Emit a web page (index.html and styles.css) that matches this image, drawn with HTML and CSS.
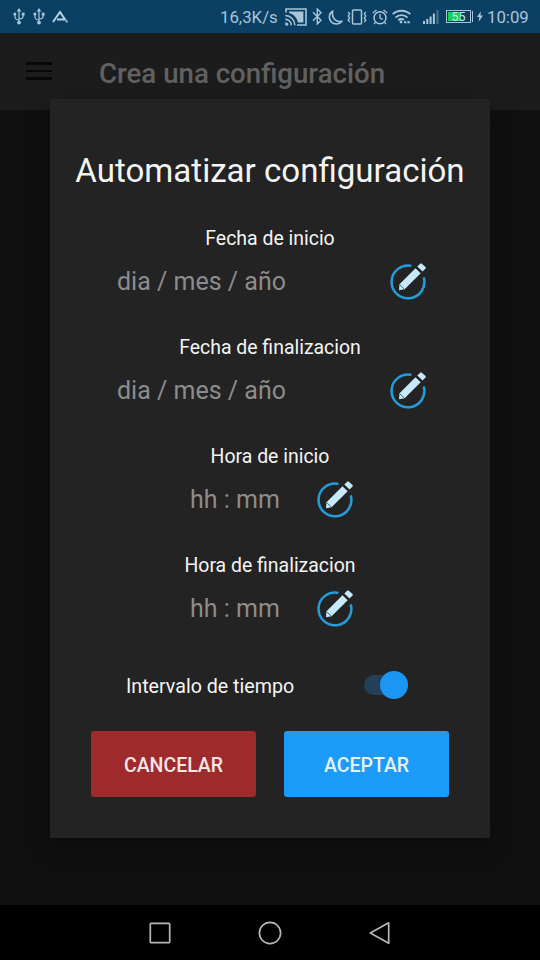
FILE: index.html
```html
<!DOCTYPE html>
<html lang="es">
<head>
<meta charset="utf-8">
<title>Automatizar configuración</title>
<link rel="stylesheet" href="styles.css">
</head>
<body>
<svg class="defs" width="0" height="0">
  <defs>
    <symbol id="edit" viewBox="0 0 38 38">
      <path d="M22.500 3.900A16.400 16.400 0 1 0 34.700 15.300" fill="none" stroke="#239ddb" stroke-width="2.500"/>
      <path d="M10.500 22.200 26.500 6.200 31.700 11.200 15.600 27.200 10 28.200Z" fill="#c6eafb"/>
      <path d="M28.300 4.500 31.200 1.700Q32 1 32.800 1.700L36.500 5.100Q37.200 5.800 36.500 6.600L33.600 9.500Z" fill="#c6eafb"/>
      <path d="M10.700 22.600 15.200 27" stroke="#397083" stroke-width="1"/>
    </symbol>
    <symbol id="usb" viewBox="0 0 12 17">
      <path d="M6 2v12M6 12C2 11.800 1.800 10 1.800 6M6 11c4 0 4.200-1.500 4.200-5" fill="none" stroke="#a5c8df" stroke-width="1.200"/>
      <path d="M6 0 8.300 3.500H3.700Z" fill="#a5c8df"/>
      <circle cx="6" cy="14.600" r="1.900" fill="#a5c8df"/>
      <circle cx="1.900" cy="6" r="1.500" fill="#a5c8df"/>
      <path d="M8.800 4.700h2.800v2.800H8.800z" fill="#a5c8df"/>
    </symbol>
  </defs>
</svg>
<div class="screen">
  <header class="status">
    <svg class="usb" width="12" height="17"><use href="#usb"/></svg>
    <svg class="usb-second" width="12" height="17"><use href="#usb"/></svg>
    <svg class="logo" width="16" height="13" viewBox="0 0 16 13"><path d="M1 12 8 2l5 7.500H5" fill="none" stroke="#b3d2e6" stroke-width="2"/><circle cx="14.700" cy="11.500" r="1.100" fill="#b3d2e6"/></svg>
    <span class="speed">16,3K/s</span>
    <svg class="cast" width="22" height="18" viewBox="0 0 22 18"><path d="M1 4.500V1h20v16h-9" fill="none" stroke="#a9c5d7" stroke-width="1.600"/><path d="M4 3.600h14.400v10.800h-5.400A12.500 12.500 0 0 0 4 5Z" fill="#a9c5d7"/><path d="M.3 7.600A9.600 9.600 0 0 1 9.900 17.200M.3 11.200A6 6 0 0 1 6.300 17.200" fill="none" stroke="#a9c5d7" stroke-width="1.500"/><path d="M.3 14.300A3 3 0 0 1 3.300 17.400H.3Z" fill="#a9c5d7"/></svg>
    <svg class="bluetooth" width="11" height="17" viewBox="0 0 11 17"><path d="M1 4.200 9 12.300 5.300 16V1L9 4.700 1 12.800" fill="none" stroke="#a9c5d7" stroke-width="1.400"/></svg>
    <svg class="moon" width="15" height="15" viewBox="0 0 15 15"><path d="M4.800 1A7 7 0 1 0 14 11.200Q9.500 12.400 6.500 9.200T4.800 1Z" fill="none" stroke="#a9c5d7" stroke-width="1.600" stroke-linejoin="round"/></svg>
    <svg class="vibrate" width="20" height="16" viewBox="0 0 20 16"><rect x="5.500" y="1" width="9" height="14" rx="1" fill="none" stroke="#a9c5d7" stroke-width="1.500"/><path d="M1.200 3l1.500 2-1.500 2 1.500 2-1.500 2 1.500 2M18.800 3l-1.500 2 1.500 2-1.500 2 1.500 2-1.500 2" fill="none" stroke="#a9c5d7" stroke-width="1.300"/></svg>
    <svg class="alarm" width="16" height="16" viewBox="0 0 16 16"><circle cx="8" cy="8.700" r="6" fill="none" stroke="#a9c5d7" stroke-width="1.500"/><path d="M8 5v4l2.700 1.400M.8 4 4.500 1M15.200 4 11.500 1M3.500 13.200 2 15M12.500 13.200 14 15" fill="none" stroke="#a9c5d7" stroke-width="1.300"/></svg>
    <svg class="wifi" width="19" height="15" viewBox="0 0 19 15"><path d="M.7 5.200A13 13 0 0 1 18.300 5.200M3.500 8.500A9 9 0 0 1 15.500 8.500M6.300 11.200A5 5 0 0 1 12 10.800" fill="none" stroke="#a9c5d7" stroke-width="1.800"/><circle cx="9" cy="13" r="1.400" fill="#a9c5d7"/><path d="M12 13.200h6" stroke="#a9c5d7" stroke-width="2" stroke-dasharray="2.400 1"/></svg>
    <svg class="signal" width="16" height="14" viewBox="0 0 16 14"><path d="M1 14v-3M4.300 14V9M7.600 14V6.500M10.900 14V3.500" stroke="#a9c5d7" stroke-width="2"/><path d="M14.500 14V0" stroke="#4b718c" stroke-width="2"/></svg>
    <div class="battery"><span class="battery-level">55</span></div>
    <svg class="bolt" width="6" height="11" viewBox="0 0 7 12"><path d="M4.500 0 0 6.700h2.700L2 12 7 4.800H4Z" fill="#a9c5d7"/></svg>
    <span class="clock">10:09</span>
  </header>
  <div class="appbar">
    <div class="menu"><i></i><i></i><i></i></div>
    <span class="appbar-title">Crea una configuración</span>
  </div>
  <main class="content">
    <section class="dialog">
      <h1 class="title">Automatizar configuración</h1>
      <div class="group">
        <div class="label">Fecha de inicio</div>
        <div class="field-row"><div class="field">dia / mes / año</div><svg class="edit"><use href="#edit"/></svg></div>
      </div>
      <div class="group">
        <div class="label">Fecha de finalizacion</div>
        <div class="field-row"><div class="field">dia / mes / año</div><svg class="edit"><use href="#edit"/></svg></div>
      </div>
      <div class="group">
        <div class="label">Hora de inicio</div>
        <div class="field-row time"><div class="field">hh : mm</div><svg class="edit"><use href="#edit"/></svg></div>
      </div>
      <div class="group">
        <div class="label">Hora de finalizacion</div>
        <div class="field-row time"><div class="field">hh : mm</div><svg class="edit"><use href="#edit"/></svg></div>
      </div>
      <div class="interval">
        <span class="interval-label">Intervalo de tiempo</span>
        <div class="switch"><div class="thumb"></div></div>
      </div>
      <div class="actions">
        <div class="button cancel">CANCELAR</div>
        <div class="button accept">ACEPTAR</div>
      </div>
    </section>
  </main>
  <nav class="navbar">
    <svg width="24" height="24" viewBox="0 0 24 24"><rect x="2.300" y="2.300" width="19.400" height="19.400" rx="1"/></svg>
    <svg width="24" height="24" viewBox="0 0 24 24"><circle cx="12" cy="12" r="10.600"/></svg>
    <svg width="24" height="24" viewBox="0 0 24 24"><path d="M20.700 1.800v20.400L2.300 12Z"/></svg>
  </nav>
</div>
</body>
</html>
```
FILE: styles.css
```css
* { box-sizing: border-box; }
body { margin: 0; background: #000; font-family: Roboto, "Liberation Sans", sans-serif; }
.defs { display: block; }
.screen { width: 540px; height: 960px; display: flex; flex-direction: column; overflow: hidden; background: #101010; }
svg { display: block; flex: none; }

.status { height: 33px; flex: none; display: flex; align-items: center; background: #0b4064; color: #a9c5d7; white-space: nowrap; }
.usb { margin-left: 13px; }
.usb-second { margin-left: 8px; }
.logo { margin-left: 7px; }
.speed { width: 59px; margin: 0 0 0 152px; font-size: 16.8px; line-height: 20px; }
.cast { margin-left: 6px; }
.bluetooth { margin-left: 5px; }
.moon { margin: 1px 0 0 5px; }
.vibrate { margin-left: 4px; }
.alarm { margin-left: 5px; }
.wifi { margin-left: 4px; }
.signal { margin-left: 12px; }
.battery { width: 25px; height: 13px; margin-left: 7px; padding: 1px; border: 1px solid #a9c5d7; display: flex; background: linear-gradient(90deg, #18cf59 13px, transparent 13px) content-box; box-shadow: 2px 0 0 -1px #0b4064, 3px 0 0 -1px #a9c5d7; }
.battery-level { width: 100%; text-align: center; font-size: 12.5px; line-height: 10px; color: #d0e6e8; }
.bolt { margin-left: 6px; }
.clock { margin: 1px 0 0 4px; font-size: 16.8px; line-height: 20px; }

.appbar { height: 77px; flex: none; display: flex; align-items: center; padding-left: 26px; background: #1c1c1c; }
.menu { width: 26px; margin-top: -1px; display: flex; flex-direction: column; gap: 5px; }
.menu i { height: 2.5px; background: #080808; }
.appbar-title { margin: 4px 0 0 47px; color: #616161; font-size: 27.650px; font-weight: 500; line-height: 32px; white-space: nowrap; }

.content { flex: 1; padding: 0 50px; background: #101010; }
.dialog { width: 440px; height: 739px; margin-top: -11px; padding-top: 52px; position: relative; background: #232323; box-shadow: 0 8px 24px rgba(0, 0, 0, .4); color: #f4f4f4; }
.title { margin: 0 0 36px; font-size: 33.100px; font-weight: 400; line-height: 40px; text-align: center; white-space: nowrap; }
.group { height: 109px; }
.label { height: 24px; font-size: 19.450px; line-height: 24px; text-align: center; white-space: nowrap; }
.field-row { height: 62px; padding-left: 63px; display: flex; align-items: center; }
.field { width: 271px; height: 41px; padding-left: 4px; border-bottom: 1px solid #202020; color: #8c8c8c; font-size: 25px; line-height: 40px; white-space: nowrap; }
.edit { width: 38px; height: 38px; margin: 0 0 2px 5px; }
.time { padding-left: 135px; }
.time .field { width: 95px; padding-left: 5px; }
.time .edit { margin-left: 36px; }
.interval { height: 40px; margin-top: 2px; padding: 0 82px 0 76px; display: flex; align-items: center; justify-content: space-between; font-size: 19.650px; }
.interval-label { margin-top: 2px; }
.switch { width: 44px; height: 20px; border-radius: 10px; background: #234058; display: flex; align-items: center; justify-content: flex-end; }
.thumb { width: 28px; height: 28px; flex: none; border-radius: 50%; background: #1b96f3; }
.actions { margin-top: 26px; padding: 0 41px; display: flex; gap: 28px; }
.button { width: 165px; height: 66px; border-radius: 3px; font-size: 19.500px; font-weight: 500; line-height: 69px; text-align: center; }
.cancel { background: #9e2a2b; color: #f7e6e6; }
.accept { background: #1d9bfa; color: #e4f4ff; }

.navbar { height: 55px; flex: none; display: flex; justify-content: center; align-items: center; gap: 86px; background: #000; position: relative; }
.navbar svg { fill: none; stroke: #b5b5b5; stroke-width: 1.7; stroke-linejoin: round; }
```
